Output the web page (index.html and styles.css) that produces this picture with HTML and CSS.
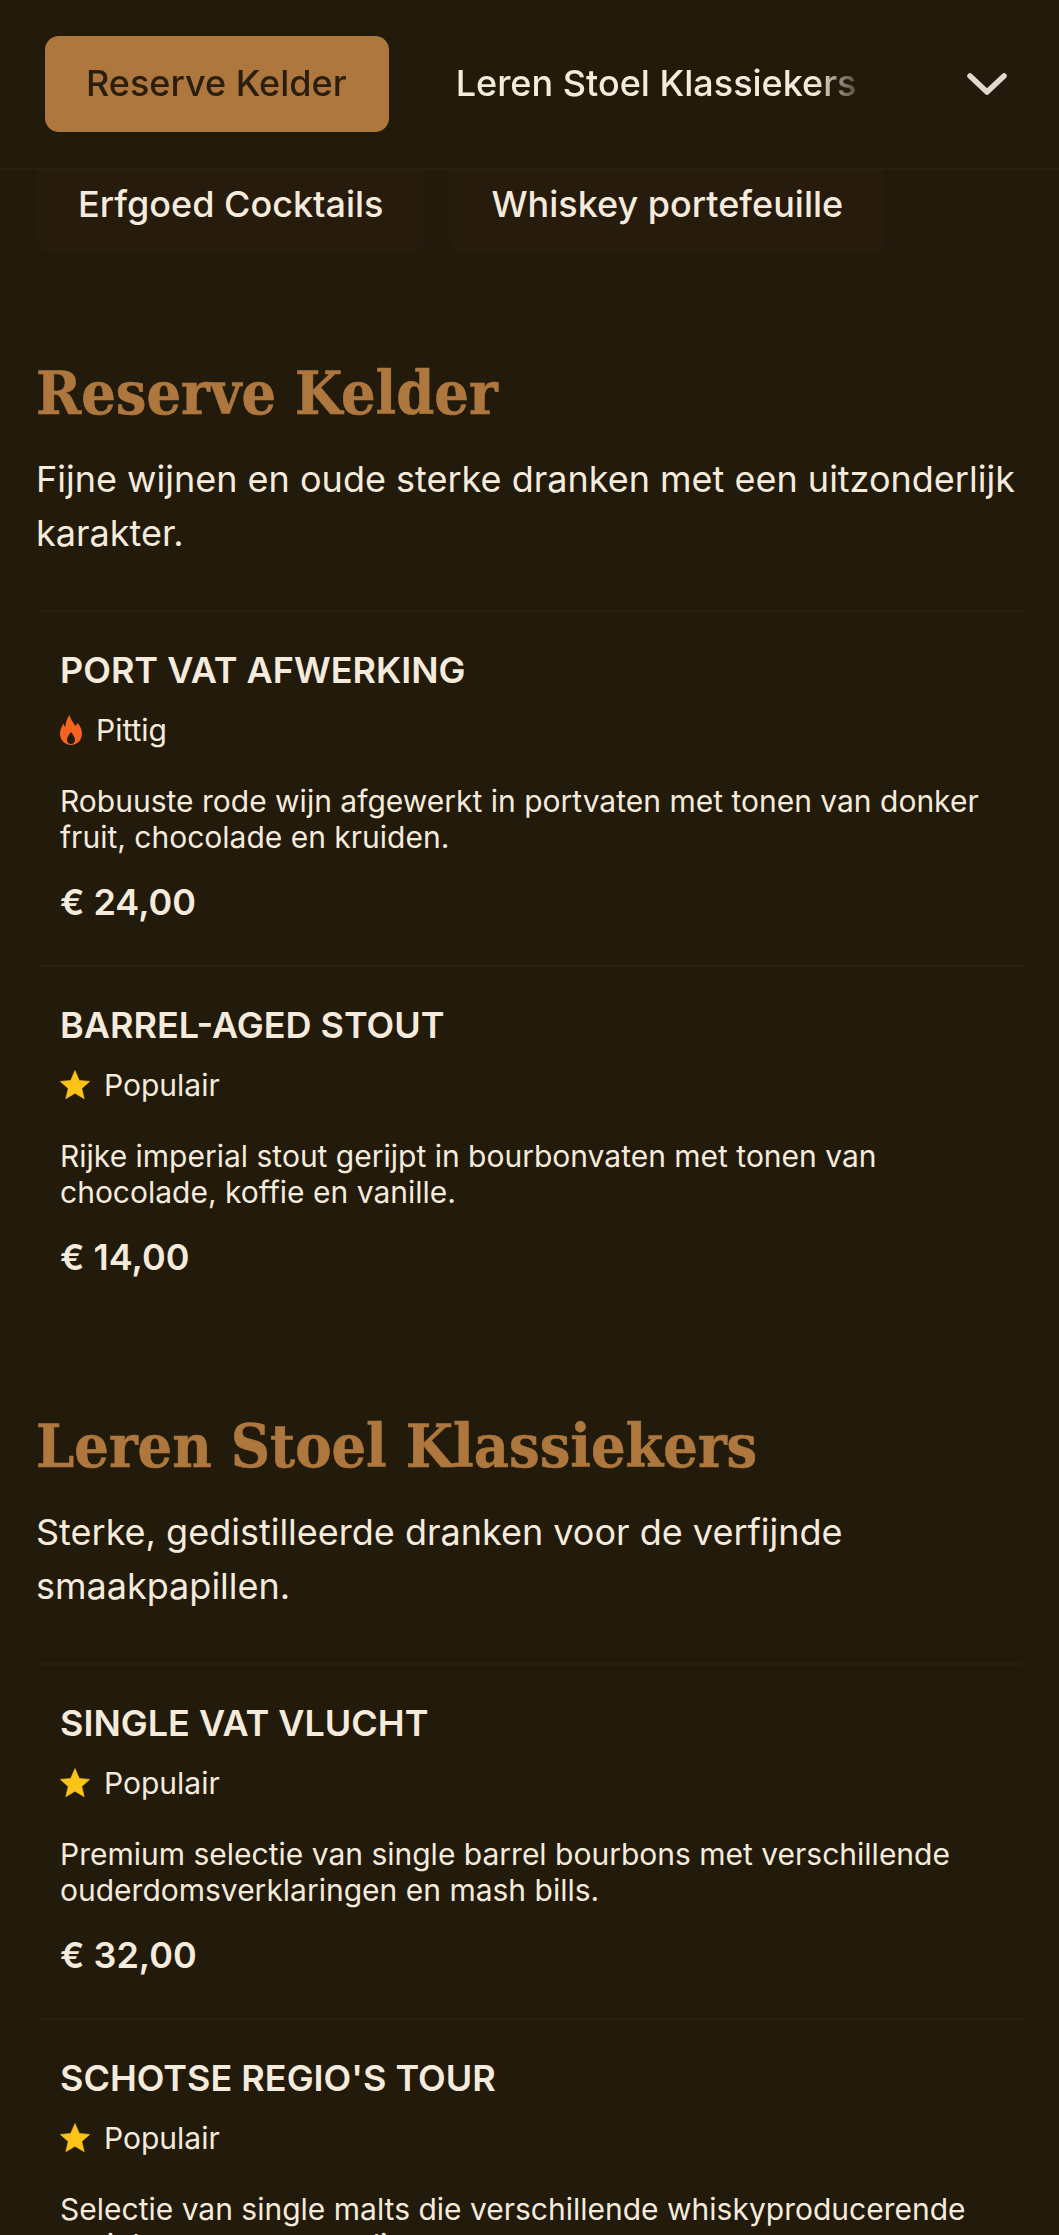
FILE: index.html
```html
<!DOCTYPE html>
<html lang="nl">
<head>
  <meta charset="UTF-8">
  <meta name="viewport" content="width=device-width, initial-scale=1.0">
  <title>Menu</title>
  <link rel="stylesheet" href="styles.css">
</head>
<body>
  <header class="top-bar">
    <nav class="tabs">
      <a class="tab active">Reserve Kelder</a>
      <a class="tab">Leren Stoel Klassiekers</a>
    </nav>
    <svg class="chevron" viewBox="0 0 44 28" fill="none"><path d="M5 6 L22 22 L39 6" stroke="#e2d8cb" stroke-width="5.500" stroke-linecap="round" stroke-linejoin="round"/></svg>
  </header>

  <div class="chips">
    <a class="chip">Erfgoed Cocktails</a>
    <a class="chip">Whiskey portefeuille</a>
  </div>

  <section class="menu-section">
    <h2>Reserve Kelder</h2>
    <p class="intro">Fijne wijnen en oude sterke dranken met een uitzonderlijk karakter.</p>
    <div class="items">
      <article class="item">
        <h3>PORT VAT AFWERKING</h3>
        <div class="badge">
          <svg class="flame" viewBox="0 0 22 30"><path fill="#f4641f" fill-rule="evenodd" d="M9.500 0C10.500 4.500 13.500 7 15.300 11c.9-.8 1.700-1.700 2.200-3C20.300 11 22 14.500 22 18.500 22 25 17.500 30 11 30S0 25 0 18.500C0 14.500 1.700 11.500 3.500 8.500c.3 1.500.8 2.700 1.700 3.700C5.500 7.500 7 3 9.500 0zM11 17c-1.700 2.300-4 5-4 8 0 2 1.500 4 4 4s4-2 4-4c0-3-2.300-5.700-4-8z"/></svg>
          <span>Pittig</span>
        </div>
        <p class="desc">Robuuste rode wijn afgewerkt in portvaten met tonen van donker fruit, chocolade en kruiden.</p>
        <div class="price">€ 24,00</div>
      </article>
      <article class="item">
        <h3>BARREL-AGED STOUT</h3>
        <div class="badge">
          <svg class="star" viewBox="0 0 30 30"><path fill="#fcc419" stroke="#fcc419" stroke-width=".6" stroke-linejoin="round" d="M15 .5l4.300 9.900 10.400 1-7.900 7 2.400 10.300L15 23.300l-9.200 5.400 2.400-10.300-7.900-7 10.400-1z"/></svg>
          <span>Populair</span>
        </div>
        <p class="desc">Rijke imperial stout gerijpt in bourbonvaten met tonen van chocolade, koffie en vanille.</p>
        <div class="price">€ 14,00</div>
      </article>
    </div>
  </section>

  <section class="menu-section">
    <h2>Leren Stoel Klassiekers</h2>
    <p class="intro">Sterke, gedistilleerde dranken voor de verfijnde smaakpapillen.</p>
    <div class="items">
      <article class="item">
        <h3>SINGLE VAT VLUCHT</h3>
        <div class="badge">
          <svg class="star" viewBox="0 0 30 30"><path fill="#fcc419" stroke="#fcc419" stroke-width=".6" stroke-linejoin="round" d="M15 .5l4.300 9.900 10.400 1-7.900 7 2.400 10.300L15 23.300l-9.200 5.400 2.400-10.300-7.900-7 10.400-1z"/></svg>
          <span>Populair</span>
        </div>
        <p class="desc">Premium selectie van single barrel bourbons met verschillende ouderdomsverklaringen en mash bills.</p>
        <div class="price">€ 32,00</div>
      </article>
      <article class="item">
        <h3>SCHOTSE REGIO'S TOUR</h3>
        <div class="badge">
          <svg class="star" viewBox="0 0 30 30"><path fill="#fcc419" stroke="#fcc419" stroke-width=".6" stroke-linejoin="round" d="M15 .5l4.300 9.900 10.400 1-7.900 7 2.400 10.300L15 23.300l-9.200 5.400 2.400-10.300-7.900-7 10.400-1z"/></svg>
          <span>Populair</span>
        </div>
        <p class="desc">Selectie van single malts die verschillende whiskyproducerende regio's vertegenwoordigen.</p>
      </article>
    </div>
  </section>
</body>
</html>
```

FILE: styles.css
```css
* {
  box-sizing: border-box;
}

html, body {
  height: 2235px;
  overflow: hidden;
}

body {
  margin: 0;
  background-color: #221a0b;
  color: #f5ebdc;
  font-family: Inter, "Noto Sans", sans-serif;
}

.top-bar {
  display: flex;
  align-items: center;
  height: 170px;
  padding: 36px 50px 36px 45px;
  border-bottom: 2px solid #281f11;
}

.tabs {
  display: flex;
  align-items: center;
  gap: 26px;
  width: 860px;
  overflow: hidden;
  -webkit-mask-image: linear-gradient(to right, #000 770px, transparent 825px);
  mask-image: linear-gradient(to right, #000 770px, transparent 825px);
}

.tab {
  padding: 0 42px 2px 41px;
  height: 96px;
  display: flex;
  align-items: center;
  font-size: 36px;
  font-weight: 500;
  border-radius: 14px;
  white-space: nowrap;
}

.tab.active {
  background-color: #ae773e;
  color: #2a1e0e;
}

.chevron {
  width: 44px;
  height: 28px;
  margin-left: auto;
}

.chips {
  display: flex;
  gap: 24px;
  height: 83px;
  padding: 0 36px;
}

.chip {
  display: flex;
  align-items: center;
  padding: 0 42px 16px;
  font-size: 36px;
  font-weight: 500;
  background-color: #261b0d;
  border-radius: 0 0 14px 14px;
  white-space: nowrap;
}

.menu-section {
  padding: 0 36px;
  margin-bottom: 86px;
}

.menu-section:first-of-type {
  margin-top: 100px;
}

h2 {
  margin: 0 0 19px;
  font-family: "DejaVu Serif Condensed", "DejaVu Serif", serif;
  font-size: 60.5px;
  font-weight: 700;
  line-height: 80px;
  color: #ae773e;
  -webkit-text-stroke: 0.6px #ae773e;
}

.intro {
  margin: 0 0 50px;
  font-size: 36px;
  line-height: 54px;
}

.item {
  padding: 37px 24px 42px;
  border-top: 2px solid #281f11;
}

.item h3 {
  margin: 0 0 21px;
  font-size: 36px;
  font-weight: 600;
  line-height: 42px;
}

.badge {
  display: flex;
  align-items: center;
  gap: 14px;
  font-size: 30px;
  line-height: 36px;
  margin-bottom: 35px;
}

.flame {
  width: 22px;
  height: 30px;
}

.star {
  width: 30px;
  height: 30px;
}

.desc {
  margin: 0 0 26px;
  font-size: 30px;
  line-height: 36px;
}

.price {
  font-size: 36px;
  font-weight: 600;
  line-height: 42px;
}
```
